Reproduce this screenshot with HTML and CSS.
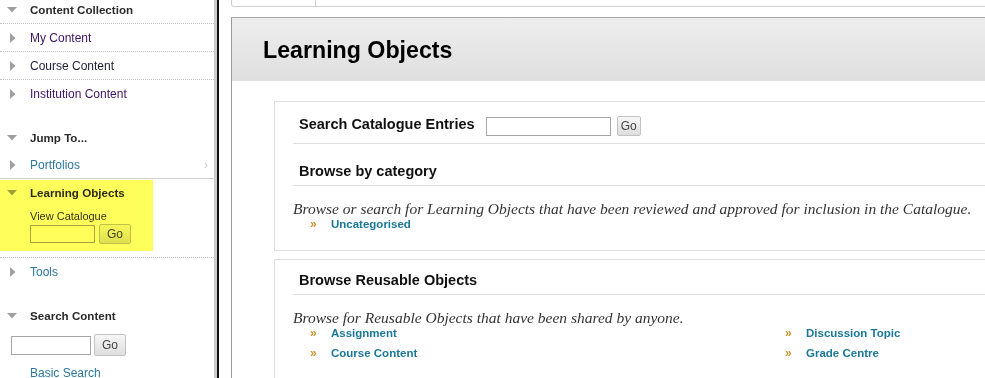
FILE: index.html
```html
<!DOCTYPE html>
<html>
<head>
<meta charset="utf-8">
<title>Learning Objects</title>
<link rel="stylesheet" href="styles.css">
</head>
<body>
<div class="page">
  <nav class="sidebar">
    <div class="menu">
      <div class="row head dotted"><span class="ico"><svg class="tri-down" width="10" height="6" viewBox="0 0 10 6"><path d="M0 0H10L5 5.5Z"/></svg></span>Content Collection</div>
      <a class="row item dotted visited" href="#"><span class="ico"><svg class="tri-right" width="6" height="10" viewBox="0 0 6 10"><path d="M0 0L5.5 5L0 10Z"/></svg></span>My Content</a>
      <a class="row item dotted dark" href="#"><span class="ico"><svg class="tri-right" width="6" height="10" viewBox="0 0 6 10"><path d="M0 0L5.5 5L0 10Z"/></svg></span>Course Content</a>
      <a class="row item visited" href="#"><span class="ico"><svg class="tri-right" width="6" height="10" viewBox="0 0 6 10"><path d="M0 0L5.5 5L0 10Z"/></svg></span>Institution Content</a>

      <div class="row head gap"><span class="ico"><svg class="tri-down" width="10" height="6" viewBox="0 0 10 6"><path d="M0 0H10L5 5.5Z"/></svg></span>Jump To...</div>
      <a class="row item solid link" href="#"><span class="ico"><svg class="tri-right" width="6" height="10" viewBox="0 0 6 10"><path d="M0 0L5.5 5L0 10Z"/></svg></span>Portfolios<span class="more">›</span></a>

      <div class="lo-group">
        <div class="row head"><span class="ico"><svg class="tri-down" width="10" height="6" viewBox="0 0 10 6"><path d="M0 0H10L5 5.5Z"/></svg></span>Learning Objects</div>
        <div class="lo-label">View Catalogue</div>
        <div class="lo-form"><input class="field lo-field" type="text"><button class="btn lo-btn" type="button">Go</button></div>
        <span class="highlight"></span>
      </div>

      <a class="row item link" href="#"><span class="ico"><svg class="tri-right" width="6" height="10" viewBox="0 0 6 10"><path d="M0 0L5.5 5L0 10Z"/></svg></span>Tools</a>

      <div class="row head gap"><span class="ico"><svg class="tri-down" width="10" height="6" viewBox="0 0 10 6"><path d="M0 0H10L5 5.5Z"/></svg></span>Search Content</div>
      <div class="sc-form"><input class="field sc-field" type="text"><button class="btn sc-btn" type="button">Go</button></div>
      <a class="basic" href="#">Basic Search</a>
    </div>
  </nav>

  <main class="main">
    <div class="topbar"><div class="tab"></div><div class="tab-rest"></div></div>
    <section class="panel">
      <header class="panel-head"><h1>Learning Objects</h1></header>
      <div class="panel-body">
        <div class="box box-first">
          <div class="search-row">
            <h2>Search Catalogue Entries</h2>
            <input class="field main-field" type="text">
            <button class="btn main-btn" type="button">Go</button>
          </div>
          <h2 class="section-title">Browse by category</h2>
          <p class="desc">Browse or search for Learning Objects that have been reviewed and approved for inclusion in the Catalogue.</p>
          <ul class="links">
            <li><span class="chev">»</span><a href="#">Uncategorised</a></li>
          </ul>
        </div>
        <div class="box box-second">
          <h2 class="section-title first">Browse Reusable Objects</h2>
          <p class="desc">Browse for Reusable Objects that have been shared by anyone.</p>
          <ul class="links">
            <li><span class="chev">»</span><a href="#">Assignment</a></li>
            <li><span class="chev">»</span><a href="#">Discussion Topic</a></li>
            <li><span class="chev">»</span><a href="#">Course Content</a></li>
            <li><span class="chev">»</span><a href="#">Grade Centre</a></li>
          </ul>
        </div>
      </div>
    </section>
  </main>
</div>
</body>
</html>
```
FILE: styles.css
```css
* { box-sizing: border-box; margin: 0; padding: 0; }
html, body { width: 985px; height: 378px; overflow: hidden; background: #fff; }
body { font-family: "Liberation Sans", Arial, sans-serif; font-size: 12px; color: #222; }

.page { display: flex; height: 378px; }

/* ---------- sidebar ---------- */
.sidebar { width: 217px; flex: none; border-right: 3px solid #cdcdcd; background: #fff; overflow: hidden; }
.menu { margin-top: -4px; }
.row { box-sizing: content-box; display: flex; align-items: center; height: 27px; padding-left: 8px; font-size: 12px; text-decoration: none; }
.ico { width: 22px; flex: none; display: flex; align-items: center; }
.tri-down { fill: #a0a0a0; margin-left: -1px; }
.tri-right { fill: #a0a0a0; margin-left: 2px; }
.head { font-weight: bold; font-size: 11.6px; color: #2a2a2a; }
.dotted { border-bottom: 1px dotted #c4c4c4; }
.solid { border-bottom: 1px solid #cfcfcf; }
.gap { margin-top: 17px; }
.visited { color: #3b1466; }
.dark { color: #1c1c36; }
.link { color: #2b77a0; }
.more { margin-left: auto; margin-right: 6px; color: #c8c8c8; font-size: 12px; }

.lo-group { position: relative; border-bottom: 1px dotted #c4c4c4; padding-bottom: 13px; }
.lo-label { margin-top: 3px; padding-left: 30px; font-size: 11px; line-height: 14px; color: #333; }
.lo-form { display: flex; align-items: center; height: 20px; margin-top: 1px; padding-left: 30px; gap: 4px; }
.lo-field { width: 65px; height: 18px; }
.lo-btn { width: 32px; height: 20px; }
.highlight { position: absolute; left: 0; top: 1px; width: 153px; height: 71px; background: #ffff5c; mix-blend-mode: multiply; pointer-events: none; }

.sc-form { display: flex; align-items: center; height: 22px; margin-top: 5px; padding-left: 11px; gap: 3px; }
.sc-field { width: 80px; height: 19px; }
.sc-btn { width: 32px; height: 22px; }
.basic { display: block; margin-top: 10px; padding-left: 30px; line-height: 14px; font-size: 12px; color: #2b77a0; text-decoration: none; }

.field { border: 1px solid #a6a6a6; background: #fff; font: 12px "Liberation Sans", Arial, sans-serif; }
.btn { border: 1px solid #c2c2c2; border-radius: 2px; background: linear-gradient(#f7f7f7, #dedede); font: 12px "Liberation Sans", Arial, sans-serif; color: #444; }

/* ---------- main ---------- */
.main { flex: 1; min-width: 0; border-left: 2px solid #111; padding-left: 12px; overflow: hidden; }
.topbar { display: flex; height: 7px; }
.tab { width: 85px; border-left: 1px solid #cfcfcf; border-right: 1px solid #cfcfcf; border-bottom: 1px solid #cfcfcf; border-bottom-left-radius: 3px; }
.tab-rest { flex: 1; border-bottom: 1px solid #cfcfcf; }

.panel { margin-top: 10px; margin-right: -40px; border-top: 1px solid #a9a9a9; border-left: 1px solid #9a9a9a; }
.panel-head { height: 63px; padding: 18px 0 0 31px; background: linear-gradient(#eeeeee, #dfdfdf); }
.panel-head h1 { font-size: 23.2px; line-height: 28px; font-weight: bold; color: #000; }
.panel-body { padding: 20px 20px 0 42px; }

.box { border: 1px solid #dedede; border-right: none; padding-left: 18px; }
.box-first { padding-bottom: 16px; }
.box-second { margin-top: 8px; padding-bottom: 20px; }

.search-row { display: flex; align-items: flex-start; padding: 13px 0 7px 6px; border-bottom: 1px solid #dedede; }
h2 { font-size: 14.5px; line-height: 18px; font-weight: bold; color: #111; }
.search-row h2 { margin-right: 11px; }
.main-field { width: 125px; height: 19px; margin-top: 2px; }
.main-btn { width: 24px; height: 20px; margin-top: 1px; margin-left: 6px; }

.section-title { padding: 18px 0 5px 6px; border-bottom: 1px solid #dedede; }
.section-title.first { padding-top: 11px; }

.desc { margin-top: 15px; padding-left: 0; font-family: "Liberation Serif", "Times New Roman", serif; font-style: italic; font-size: 15.5px; line-height: 16px; color: #333; white-space: nowrap; }

.links { list-style: none; margin-top: -3px; padding-left: 17px; display: grid; grid-template-columns: 475px auto; }
.links li { display: flex; line-height: 20px; }
.chev { width: 21px; flex: none; font-weight: bold; font-size: 12px; color: #cc9530; }
.links a { font-weight: bold; font-size: 11.5px; color: #1a7898; text-decoration: none; }
```
